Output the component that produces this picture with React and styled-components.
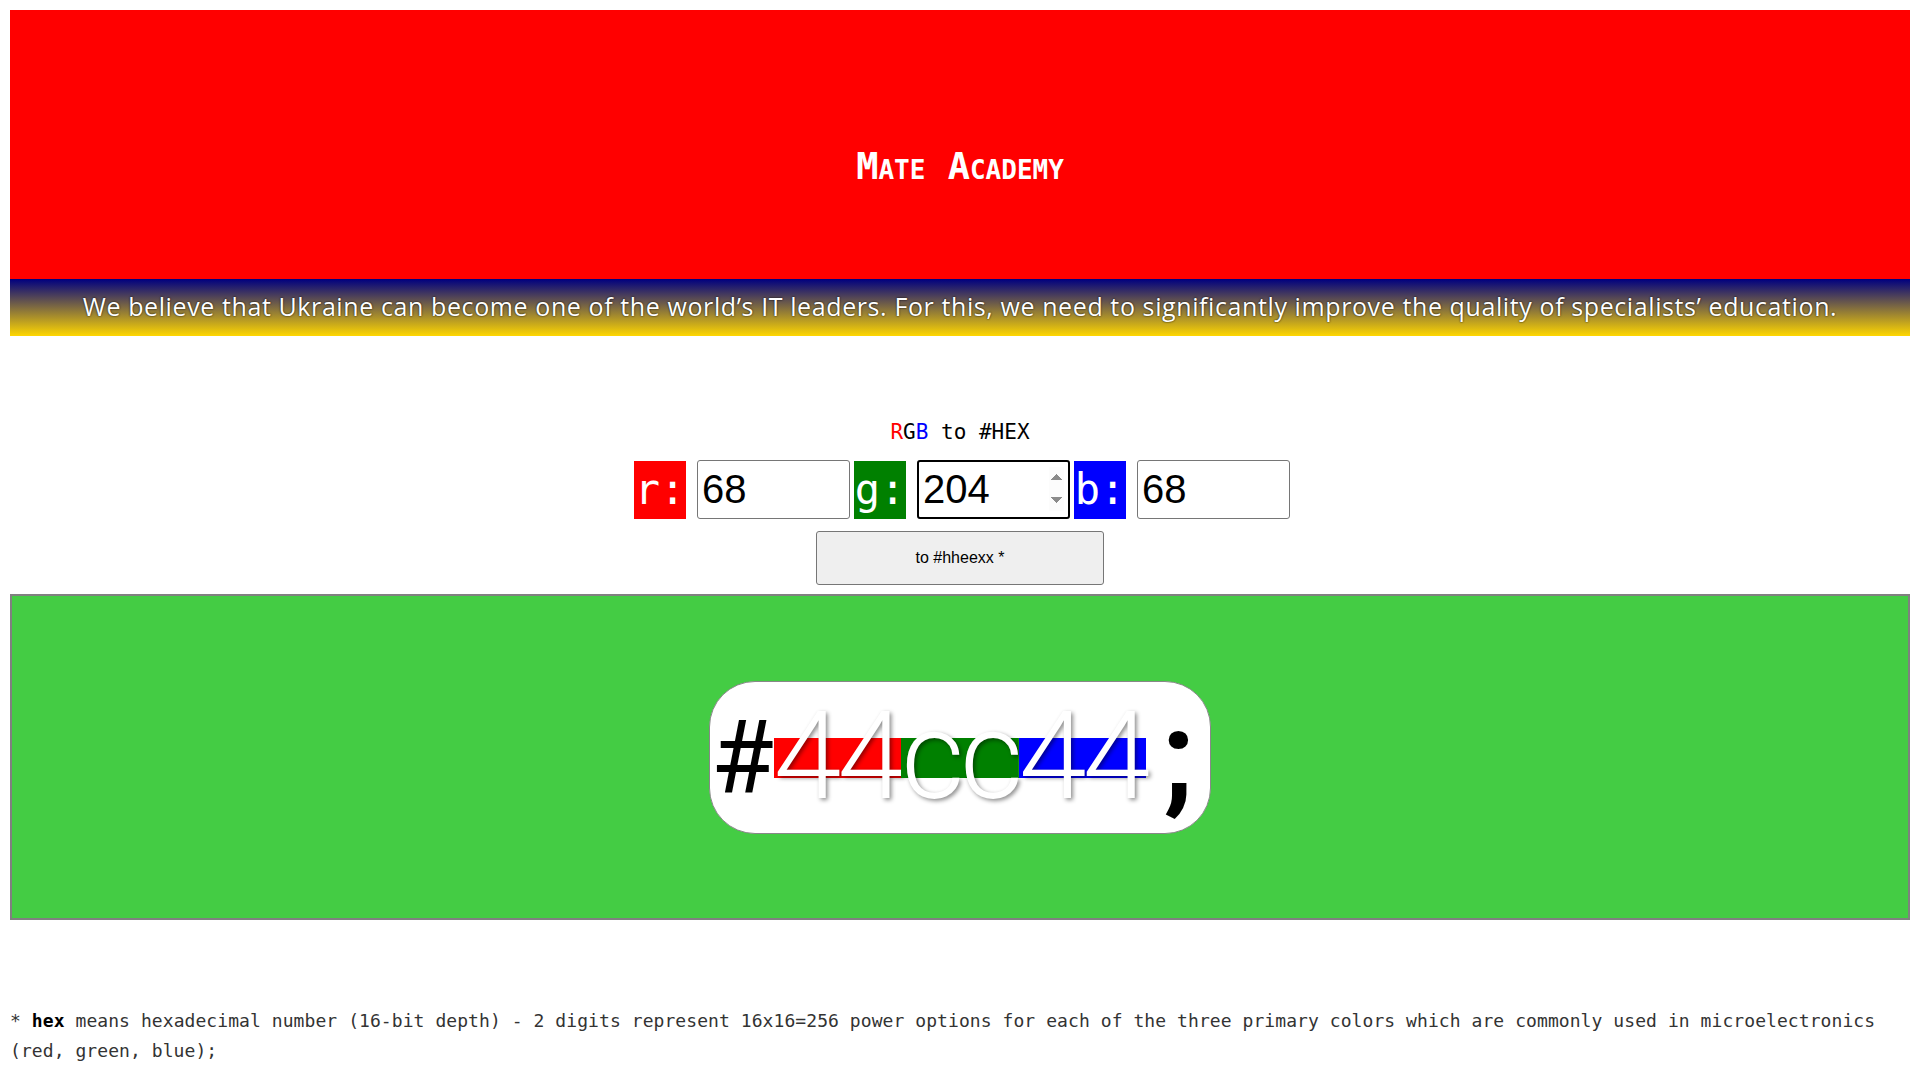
import React from 'react'
import styled, { createGlobalStyle } from 'styled-components'

const GlobalStyle = createGlobalStyle`
    body {
        margin: 10px;
        background: #fff;
        font-family: "Liberation Sans", Arial, sans-serif;
    }
`

const channels = [
    { key: 'r', value: 68, color: '#ff0000' },
    { key: 'g', value: 204, color: '#008000', focused: true },
    { key: 'b', value: 68, color: '#0000ff' },
]

const pairs = [
    { text: '44', color: '#ff0000' },
    { text: 'cc', color: '#008000' },
    { text: '44', color: '#0000ff' },
]

function App() {
    return (
        <>
            <GlobalStyle />
            <Header>
                <Logo>Mate Academy</Logo>
            </Header>
            <Banner>
                We believe that Ukraine can become one of the world’s IT leaders. For this, we need to significantly improve the quality of specialists’ education.
            </Banner>

            <Converter>
                <Title>
                    <Letter color="#ff0000">R</Letter>G<Letter color="#0000ff">B</Letter> to #HEX
                </Title>

                <Fields>
                    {channels.map((c) => (
                        <Field key={c.key}>
                            <Label bg={c.color}>{c.key}:</Label>
                            <NumberInput
                                type="number"
                                min="0"
                                max="255"
                                defaultValue={c.value}
                                autoFocus={c.focused}
                                $focused={c.focused}
                            />
                        </Field>
                    ))}
                </Fields>

                <Button type="button">to #hheexx *</Button>
            </Converter>

            <Result>
                <Pill>
                    <Hash>#</Hash>
                    {pairs.map((p, i) => (
                        <Pair key={i} color={p.color}>{p.text}</Pair>
                    ))}
                    <Semi>;</Semi>
                </Pill>
            </Result>

            <Note>
                * <b>hex</b> means hexadecimal number (16-bit depth) - 2 digits represent 16x16=256 power options for each of the three primary colors which are commonly used in microelectronics (red, green, blue);
            </Note>
        </>
    )
}

export default App

const Header = styled.header`
    height: 269px;
    box-sizing: border-box;
    padding-top: 137px;
    background: #ff0000;
    text-align: center;
`

const Logo = styled.h1`
    margin: 0;
    font-family: "DejaVu Sans Mono", monospace;
    font-variant: small-caps;
    font-weight: bold;
    font-size: 37px;
    line-height: 40px;
    color: #fff;
`

const Banner = styled.p`
    margin: 0;
    height: 57px;
    box-sizing: border-box;
    padding-bottom: 4px;
    display: flex;
    align-items: center;
    justify-content: center;
    background: linear-gradient(180deg, #000080 0%, #ffd700 100%);
    font-family: "Open Sans", Lato, sans-serif;
    font-size: 25px;
    letter-spacing: 0.6px;
    color: #fff;
    text-shadow: 0 0 2px #000;
    white-space: nowrap;
`

const Converter = styled.section`
    display: flex;
    flex-direction: column;
    align-items: center;
    margin-top: 84px;
`

const Title = styled.h3`
    margin: 0;
    font-family: "DejaVu Sans Mono", monospace;
    font-weight: normal;
    font-size: 21px;
    line-height: 24px;
    color: #000;
`

const Letter = styled.span`
    color: ${(p) => p.color};
`

const Fields = styled.div`
    display: flex;
    gap: 4px;
    margin-top: 16px;
    margin-left: 4px;
`

const Field = styled.div`
    display: flex;
    align-items: center;
    gap: 11px;
`

const Label = styled.span`
    width: 52px;
    height: 58px;
    display: flex;
    align-items: center;
    justify-content: center;
    background: ${(p) => p.bg};
    color: #fff;
    font-family: "DejaVu Sans Mono", monospace;
    font-size: 42px;
`

const NumberInput = styled.input`
    width: 153px;
    height: 59px;
    box-sizing: border-box;
    padding: 0 4px;
    border: ${(p) => (p.$focused ? '2px solid #000' : '1px solid #767676')};
    border-radius: 3px;
    font-family: "Liberation Sans", Arial, sans-serif;
    font-size: 40px;
    color: #000;
    background: #fff;
    outline: none;

    &:not(:focus)::-webkit-inner-spin-button {
        -webkit-appearance: none;
        margin: 0;
    }
`

const Button = styled.button`
    width: 288px;
    height: 54px;
    margin-top: 12px;
    background: #efefef;
    border: 1px solid #767676;
    border-radius: 3px;
    font-family: "Liberation Sans", Arial, sans-serif;
    font-size: 16px;
    color: #000;
`

const Result = styled.div`
    margin-top: 9px;
    height: 326px;
    box-sizing: border-box;
    border: 2px solid #808080;
    background: #44cc44;
    display: flex;
    align-items: center;
    justify-content: center;
`

const Pill = styled.div`
    width: 502px;
    height: 153px;
    box-sizing: border-box;
    padding: 0 0 0 1px;
    display: flex;
    align-items: center;
    background: #fff;
    border: 1px solid #888;
    border-radius: 46px;
    font-family: Roboto, "Noto Sans", sans-serif;
    font-size: 122px;
    line-height: 1;
`

const Hash = styled.span`
    color: #000;
    font-weight: 400;
    font-size: 102px;
`

const Pair = styled.span`
    color: #fff;
    font-weight: 300;
    letter-spacing: -4px;
    text-shadow: 2px 2px 4px rgba(0, 0, 0, 0.45);
    background: linear-gradient(${(p) => p.color}, ${(p) => p.color}) no-repeat center 51% / 100% 40px;
`

const Semi = styled.span`
    color: #000;
    font-weight: 700;
    margin-left: 16px;
`

const Note = styled.p`
    margin: 86px 0 0;
    font-family: "DejaVu Sans Mono", monospace;
    font-size: 18px;
    letter-spacing: 0.07px;
    line-height: 30px;
    color: #333;

    b {
        color: #000;
    }
`
